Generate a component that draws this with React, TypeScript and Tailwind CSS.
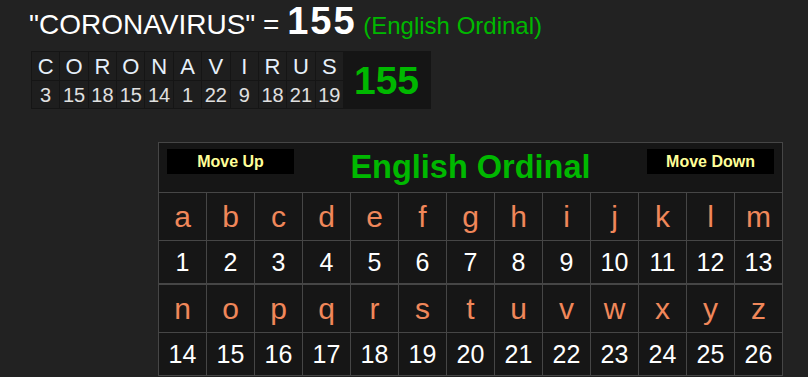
import React from "react";

const word = "CORONAVIRUS";
const val = (c: string) => c.toUpperCase().charCodeAt(0) - 64;
const alpha1 = "abcdefghijklm".split("");
const alpha2 = "nopqrstuvwxyz".split("");

function Group({ letters }: { letters: string[] }) {
  return (
    <div className="grid grid-cols-[repeat(13,47px)] grid-rows-[47px_42px] gap-px">
      {letters.map((l) => (
        <div key={l} className="bg-[#161616] text-center text-[30px] leading-[47px] text-[#f0875a]">
          {l}
        </div>
      ))}
      {letters.map((l) => (
        <div key={l + "n"} className="bg-[#161616] text-center text-[25px] leading-[42px] text-white">
          {val(l)}
        </div>
      ))}
    </div>
  );
}

export default function App() {
  const letters = word.split("");
  return (
    <div
      className="w-[808px] h-[377px] overflow-hidden bg-[#222222]"
      style={{ fontFamily: '"Liberation Sans", Arial, sans-serif' }}
    >
      <div className="h-[51px] pl-[29px] pt-[2px] flex items-baseline whitespace-pre">
        <span className="text-[28px] leading-none text-white">"CORONAVIRUS" = </span>
        <span className="text-[38px] leading-none font-bold tracking-[2px] text-white">155</span>
        <span className="text-[24px] leading-none text-[#00b800]"> (English Ordinal)</span>
      </div>

      <div className="ml-[31px] flex w-[400px] bg-[#151515] p-px">
        <div className="grid grid-cols-[repeat(11,27.36px)] grid-rows-[28px_27px] gap-px">
          {letters.map((l, i) => (
            <div key={"l" + i} className="bg-[#1e1e1e] text-center text-[22px] leading-[24px] pt-[3px] text-[#e6f0fa]">
              {l}
            </div>
          ))}
          {letters.map((l, i) => (
            <div key={"n" + i} className="bg-[#1e1e1e] text-center text-[20px] leading-[20px] pt-[4px] text-[#e0e0e0]">
              {val(l)}
            </div>
          ))}
        </div>
        <div className="flex flex-1 items-center justify-center text-[39px] font-bold leading-none text-[#00b800]">
          155
        </div>
      </div>

      <div className="ml-[158px] mt-[33px] w-[625px] bg-[#464646] p-px">
        <div className="mb-px grid h-[49px] grid-cols-[127px_1fr_127px] bg-[#161616] px-[8px]">
          <div className="mt-[6px] flex h-[25px] items-center justify-center bg-black text-[16px] font-bold text-[#ffff99]">
            Move Up
          </div>
          <div className="flex items-center justify-center text-[32.5px] font-bold leading-none text-[#00b800]">
            English Ordinal
          </div>
          <div className="mt-[6px] flex h-[25px] items-center justify-center bg-black text-[16px] font-bold text-[#ffff99]">
            Move Down
          </div>
        </div>
        <Group letters={alpha1} />
        <div className="h-[2px]" />
        <Group letters={alpha2} />
      </div>
    </div>
  );
}
